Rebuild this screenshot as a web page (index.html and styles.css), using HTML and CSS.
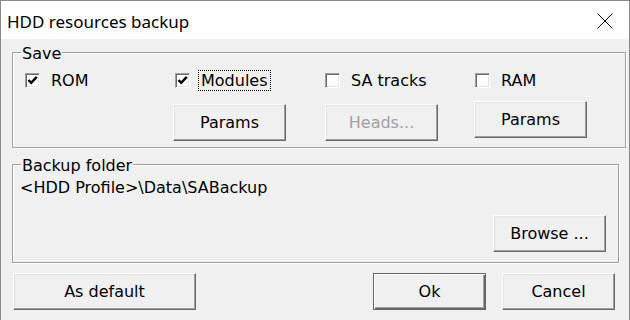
FILE: index.html
```html
<!DOCTYPE html>
<html>
<head>
  <title>HDD resources backup</title>
  <link rel="stylesheet" href="styles.css">
</head>
<body>
  <div class="window">
    <header class="titlebar">
      <span class="title">HDD resources backup</span>
      <svg class="close" width="16" height="16" viewBox="0 0 16 16">
        <path d="M0.5 0.5 L15.5 15.5 M15.5 0.5 L0.5 15.5" stroke="#000" stroke-width="1" fill="none"/>
      </svg>
    </header>

    <div class="content">
      <!-- Save group -->
      <fieldset class="group save">
        <legend>Save</legend>
        <div class="save-grid">
          <label class="check">
            <span class="box"><svg width="11" height="11" viewBox="0 0 11 11"><path d="M1.5 5 L4.2 7.8 L9.8 1.8" stroke="#000" stroke-width="2.5" fill="none"/></svg></span>
            <span class="text">ROM</span>
          </label>
          <label class="check">
            <span class="box"><svg width="11" height="11" viewBox="0 0 11 11"><path d="M1.5 5 L4.2 7.8 L9.8 1.8" stroke="#000" stroke-width="2.5" fill="none"/></svg></span>
            <span class="text focus">Modules</span>
          </label>
          <label class="check">
            <span class="box"></span>
            <span class="text">SA tracks</span>
          </label>
          <label class="check">
            <span class="box"></span>
            <span class="text">RAM</span>
          </label>

          <span></span>
          <button class="btn first">Params</button>
          <button class="btn" disabled>Heads...</button>
          <button class="btn raised">Params</button>
        </div>
      </fieldset>

      <!-- Backup folder group -->
      <fieldset class="group folder">
        <legend>Backup folder</legend>
        <div class="folder-body">
          <div class="path">&lt;HDD Profile&gt;\Data\SABackup</div>
          <div class="folder-actions">
            <button class="btn">Browse ...</button>
          </div>
        </div>
      </fieldset>

      <div class="actions">
        <button class="btn wide">As default</button>
        <div class="right">
          <button class="btn default">Ok</button>
          <button class="btn">Cancel</button>
        </div>
      </div>
    </div>
  </div>
</body>
</html>
```

FILE: styles.css
```css
/* dialog window */
body {
  margin: 0;
  padding: 0;
  background-color: #f0f0f0;
  font-family: "DejaVu Sans", Tahoma, sans-serif;
  font-size: 16px;
  color: #000;
}
.window {
  width: 630px;
  height: 320px;
  box-sizing: border-box;
  border: 1px solid #8a8a8a;
  border-bottom: none;
  background-color: #f0f0f0;
}
.titlebar {
  height: 38px;
  background-color: #fff;
  display: flex;
  align-items: center;
  justify-content: space-between;
  padding: 0 16px 0 6px;
}
.title {
  font-family: "Noto Sans", "Open Sans", sans-serif;
  font-size: 17px;
  margin-top: 3px;
}
.close {
  margin-top: 2px;
}
.content {
  padding: 0 10px 0 11px;
}

/* group boxes */
.group {
  margin: 0;
  padding: 0;
  border: 1px solid #a0a0a0;
  box-shadow: inset 1px 1px #fff, 1px 1px #fff;
}
.group legend {
  margin-left: 8px;
  padding: 4px 1px 0 1px;
  line-height: 16px;
  background-color: #f0f0f0;
}
.save {
  margin-top: 3px;
  height: 106px;
  box-sizing: border-box;
}
.save-grid {
  display: grid;
  grid-template-columns: repeat(4, 150px);
  row-gap: 12px;
  padding: 6px 0 0 12px;
}
.check {
  display: flex;
  align-items: center;
  gap: 11px;
  height: 24px;
}
.box {
  width: 15px;
  height: 15px;
  box-sizing: border-box;
  background-color: #fff;
  border: 1px solid;
  border-color: #a0a0a0 #fff #fff #a0a0a0;
  box-shadow: inset 1px 1px #696969, inset -1px -1px #e3e3e3;
  display: flex;
  align-items: center;
  justify-content: center;
}
.text.focus {
  outline: 1px dotted #000;
  padding: 0 2px;
  margin-left: -2px;
}

/* buttons */
.btn {
  font-family: "DejaVu Sans", Tahoma, sans-serif;
  font-size: 16px;
  color: #000;
  width: 113px;
  height: 37px;
  background-color: #f0f0f0;
  border: 1px solid;
  border-color: #fff #696969 #696969 #fff;
  box-shadow: inset -1px -1px #a0a0a0, inset 1px 1px #e3e3e3;
  padding: 0;
}
.btn:disabled {
  color: #a0a0a0;
}
.btn.first {
  margin-left: -2px;
}
.btn.raised {
  margin-top: -3px;
  margin-left: -1px;
}
.btn.default {
  border-color: #646464;
  box-shadow: inset 1px 1px #fff, inset -1px -1px #696969, inset -2px -2px #a0a0a0;
}
.btn.wide {
  width: 183px;
  margin-left: 1px;
}

.folder {
  margin-top: 6px;
  height: 109px;
  box-sizing: border-box;
}
.folder-body {
  padding: 4px 12px 0 7px;
}
.path {
  line-height: 20px;
}
.folder-actions {
  display: flex;
  justify-content: flex-end;
  margin-top: 17px;
}

.actions {
  display: flex;
  justify-content: space-between;
  margin-top: 10px;
  padding-right: 4px;
}
.actions .right {
  display: flex;
  gap: 16px;
}
```
